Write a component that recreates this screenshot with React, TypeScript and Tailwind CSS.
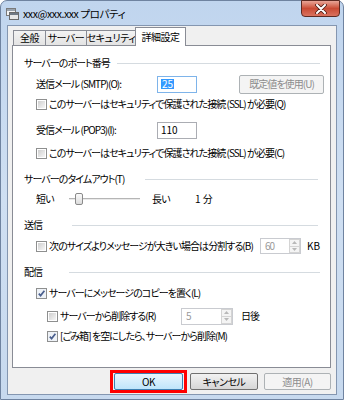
import React from "react";

function Check({ checked }: { checked?: boolean }) {
  return (
    <span className="flex h-[11px] w-[11px] shrink-0 items-center justify-center border border-[#8e8f8f] bg-white">
      {checked ? (
        <svg width="9" height="9" viewBox="0 0 9 9" className="block">
          <rect x="0" y="0" width="9" height="9" fill="#eef2f7" />
          <path d="M1.8 4.6 L3.6 6.6 L7.4 1.8" fill="none" stroke="#4a5f8e" strokeWidth="1.7" />
        </svg>
      ) : (
        <span className="block h-[7px] w-[7px] bg-gradient-to-br from-[#cfcfcf] to-[#f6f6f6]" />
      )}
    </span>
  );
}

function CheckRow({ label, checked }: { label: string; checked?: boolean }) {
  return (
    <span className="flex items-center gap-[2px]">
      <Check checked={checked} />
      <span>{label}</span>
    </span>
  );
}

function GroupHeader({ label, labelWidth, end = 10 }: { label: string; labelWidth: number; end?: number }) {
  return (
    <div className="mt-[6px] flex h-[20px] items-center first:mt-0">
      <span className="shrink-0" style={{ width: labelWidth }}>
        {label}
      </span>
      <span className="h-px flex-1 bg-[#d5dbe0]" style={{ marginRight: end }} />
    </div>
  );
}

function Spin({ value, width, height }: { value: string; width: number; height: number }) {
  return (
    <span
      className="flex shrink-0 items-stretch border border-[#c9cbd0] bg-white"
      style={{ width, height }}
    >
      <span className="flex flex-1 items-center pl-[4px] text-[#9a9a9a]">{value}</span>
      <span className="flex w-[11px] flex-col">
        <span className="flex flex-1 items-center justify-center border border-[#d4d4d4] bg-[#f4f4f4]">
          <svg width="5" height="3" viewBox="0 0 5 3">
            <path d="M0 3 L2.5 0 L5 3 Z" fill="#b8b8b8" />
          </svg>
        </span>
        <span className="flex flex-1 items-center justify-center border border-t-0 border-[#d4d4d4] bg-[#f4f4f4]">
          <svg width="5" height="3" viewBox="0 0 5 3">
            <path d="M0 0 L2.5 3 L5 0 Z" fill="#b8b8b8" />
          </svg>
        </span>
      </span>
    </span>
  );
}

function Field({ value, selected }: { value: string; selected?: boolean }) {
  return (
    <span
      className={
        "flex h-[17px] w-[40px] shrink-0 items-center border bg-white pl-[3px] tracking-normal " +
        (selected ? "border-[#7eb4ea]" : "border-[#abadb3]")
      }
    >
      {selected ? <span className="bg-[#3399ff] px-[1px] text-white">{value}</span> : <span>{value}</span>}
    </span>
  );
}

export default function App() {
  return (
    <div className="h-[400px] w-[344px] overflow-hidden whitespace-nowrap font-['Noto_Sans_CJK_JP','Noto_Sans',sans-serif] text-[10px] leading-none tracking-[-0.95px] text-black [font-feature-settings:'palt']">
      <div className="flex h-full flex-col rounded-t-[7px] border border-[#6f83a0] bg-gradient-to-b from-[#c0d5ee] via-[#cfdff2] to-[#c7d9ee] px-[6px] pb-[4px]">
        {/* title bar */}
        <div className="flex h-[24px] shrink-0 items-start">
          <div className="flex flex-1 items-center gap-[4px] pt-[6px]">
            <svg width="14" height="13" viewBox="0 0 14 13" className="-ml-[2px]">
              <rect x="1.5" y="1.5" width="9" height="7" fill="#f4f4f4" stroke="#7a7a7a" />
              <rect x="2" y="2" width="8" height="2" fill="#9aa3ad" />
              <rect x="4.5" y="5.5" width="9" height="7" fill="#e8e8e8" stroke="#6a6a6a" />
              <rect x="5" y="6" width="8" height="2" fill="#707a86" />
            </svg>
            <span className="pt-[1px] text-[10.5px] tracking-[-0.4px]">xxx@xxx.xxx プロパティ</span>
          </div>
          <div className="-mt-px mr-[-3px] flex h-[17px] w-[39px] items-center justify-center rounded-b-[4px] border border-[#5d2a22] bg-gradient-to-b from-[#e8a597] via-[#c94a34] to-[#d9725f]">
            <svg width="12" height="10" viewBox="0 0 12 10">
              <path d="M2 1 L10 9 M10 1 L2 9" stroke="#4b1a12" strokeWidth="3.6" strokeLinecap="round" />
              <path d="M2 1 L10 9 M10 1 L2 9" stroke="#ffffff" strokeWidth="2" strokeLinecap="round" />
            </svg>
          </div>
        </div>

        {/* dialog body */}
        <div className="flex flex-1 flex-col border border-[#8496b0] bg-[#f0f0f0]">
          {/* tabs */}
          <div className="flex h-[19px] items-end pl-[5px] tracking-[-0.5px]">
            {["全般", "サーバー", "セキュリティ"].map((t, i) => (
              <span
                key={t}
                className={
                  "flex h-[15px] items-center justify-center border border-b-0 border-[#898c95] bg-gradient-to-b from-[#f3f3f3] to-[#e3e3e3] " +
                  (i === 0 ? "w-[33px]" : i === 1 ? "-ml-px w-[42px]" : "-ml-px w-[50px]")
                }
              >
                {t}
              </span>
            ))}
            <span className="relative z-10 -mb-px -ml-px flex h-[19px] w-[51px] items-center justify-center border border-b-0 border-[#898c95] bg-white">
              詳細設定
            </span>
          </div>

          {/* panel */}
          <div className="ml-[4px] mr-[5px] flex h-[323px] flex-col border border-[#898c95] bg-white pt-[7px] pl-[11px]">
            <GroupHeader label="サーバーのポート番号" labelWidth={93} />

            <div className="ml-[12px] mt-[1px] flex h-[20px] items-center">
              <span className="w-[121px] shrink-0">送信メール (SMTP)(O):</span>
              <Field value="25" selected />
              <span className="ml-[42px] flex h-[19px] w-[85px] shrink-0 items-center justify-center rounded-[2px] border border-[#adb2b5] bg-[#f4f4f4] text-[#8d8d8d]">
                既定値を使用(U)
              </span>
            </div>

            <div className="ml-[12px] flex h-[20px] items-center">
              <CheckRow label="このサーバーはセキュリティで保護された接続 (SSL) が必要(Q)" />
            </div>

            <div className="ml-[12px] mt-[6px] flex h-[20px] items-center">
              <span className="w-[121px] shrink-0">受信メール (POP3)(I):</span>
              <Field value="110" />
            </div>

            <div className="ml-[12px] mt-[3px] flex h-[20px] items-center">
              <CheckRow label="このサーバーはセキュリティで保護された接続 (SSL) が必要(C)" />
            </div>

            <GroupHeader label="サーバーのタイムアウト(T)" labelWidth={121} end={12} />

            <div className="ml-[12px] flex h-[20px] items-center">
              <span className="w-[33px] shrink-0">短い</span>
              <span className="relative flex h-[20px] w-[71px] shrink-0 items-center">
                <span className="h-[2px] w-full border-t border-[#b5b5b5] bg-[#eaeaea]" />
                <span className="absolute left-[6px] top-[4px] h-[12px] w-[8px] rounded-[2px] border border-[#8a8a8a] bg-gradient-to-b from-[#fbfbfb] to-[#dcdcdc]" />
              </span>
              <span className="ml-[12px] w-[43px] shrink-0">長い</span>
              <span className="tracking-normal">1 分</span>
            </div>

            <GroupHeader label="送信" labelWidth={48} end={12} />

            <div className="ml-[12px] mt-[1px] flex h-[20px] items-center">
              <span className="w-[224px] shrink-0">
                <CheckRow label="次のサイズよりメッセージが大きい場合は分割する(B)" />
              </span>
              <Spin value="60" width={41} height={16} />
              <span className="ml-[6px] tracking-normal">KB</span>
            </div>

            <GroupHeader label="配信" labelWidth={45} />

            <div className="ml-[12px] mt-[1px] flex h-[20px] items-center">
              <CheckRow label="サーバーにメッセージのコピーを置く(L)" checked />
            </div>

            <div className="ml-[23px] mt-[3px] flex h-[20px] items-center">
              <span className="w-[134px] shrink-0">
                <CheckRow label="サーバーから削除する(R)" />
              </span>
              <Spin value="5" width={52} height={17} />
              <span className="ml-[8px]">日後</span>
            </div>

            <div className="ml-[23px] flex h-[20px] items-center">
              <CheckRow label="[ごみ箱] を空にしたら、サーバーから削除(M)" checked />
            </div>
          </div>

          {/* buttons */}
          <div className="mr-[5px] mt-[2px] flex items-center justify-end tracking-[-0.5px]">
            <span className="border-[3px] border-[#ff0000] px-[1px]">
              <span className="flex h-[17px] w-[69px] items-center justify-center rounded-[2px] border border-[#3c7fb1] bg-gradient-to-b from-[#eaf6fd] to-[#bfe5fb]">
                OK
              </span>
            </span>
            <span className="ml-[3px] flex h-[17px] w-[68px] items-center justify-center rounded-[2px] border border-[#707070] bg-gradient-to-b from-[#f2f2f2] to-[#d6d6d6]">
              キャンセル
            </span>
            <span className="ml-[6px] flex h-[17px] w-[67px] items-center justify-center rounded-[2px] border border-[#adb2b5] bg-[#f4f4f4] text-[#8d8d8d]">
              適用(A)
            </span>
          </div>
        </div>
      </div>
    </div>
  );
}
